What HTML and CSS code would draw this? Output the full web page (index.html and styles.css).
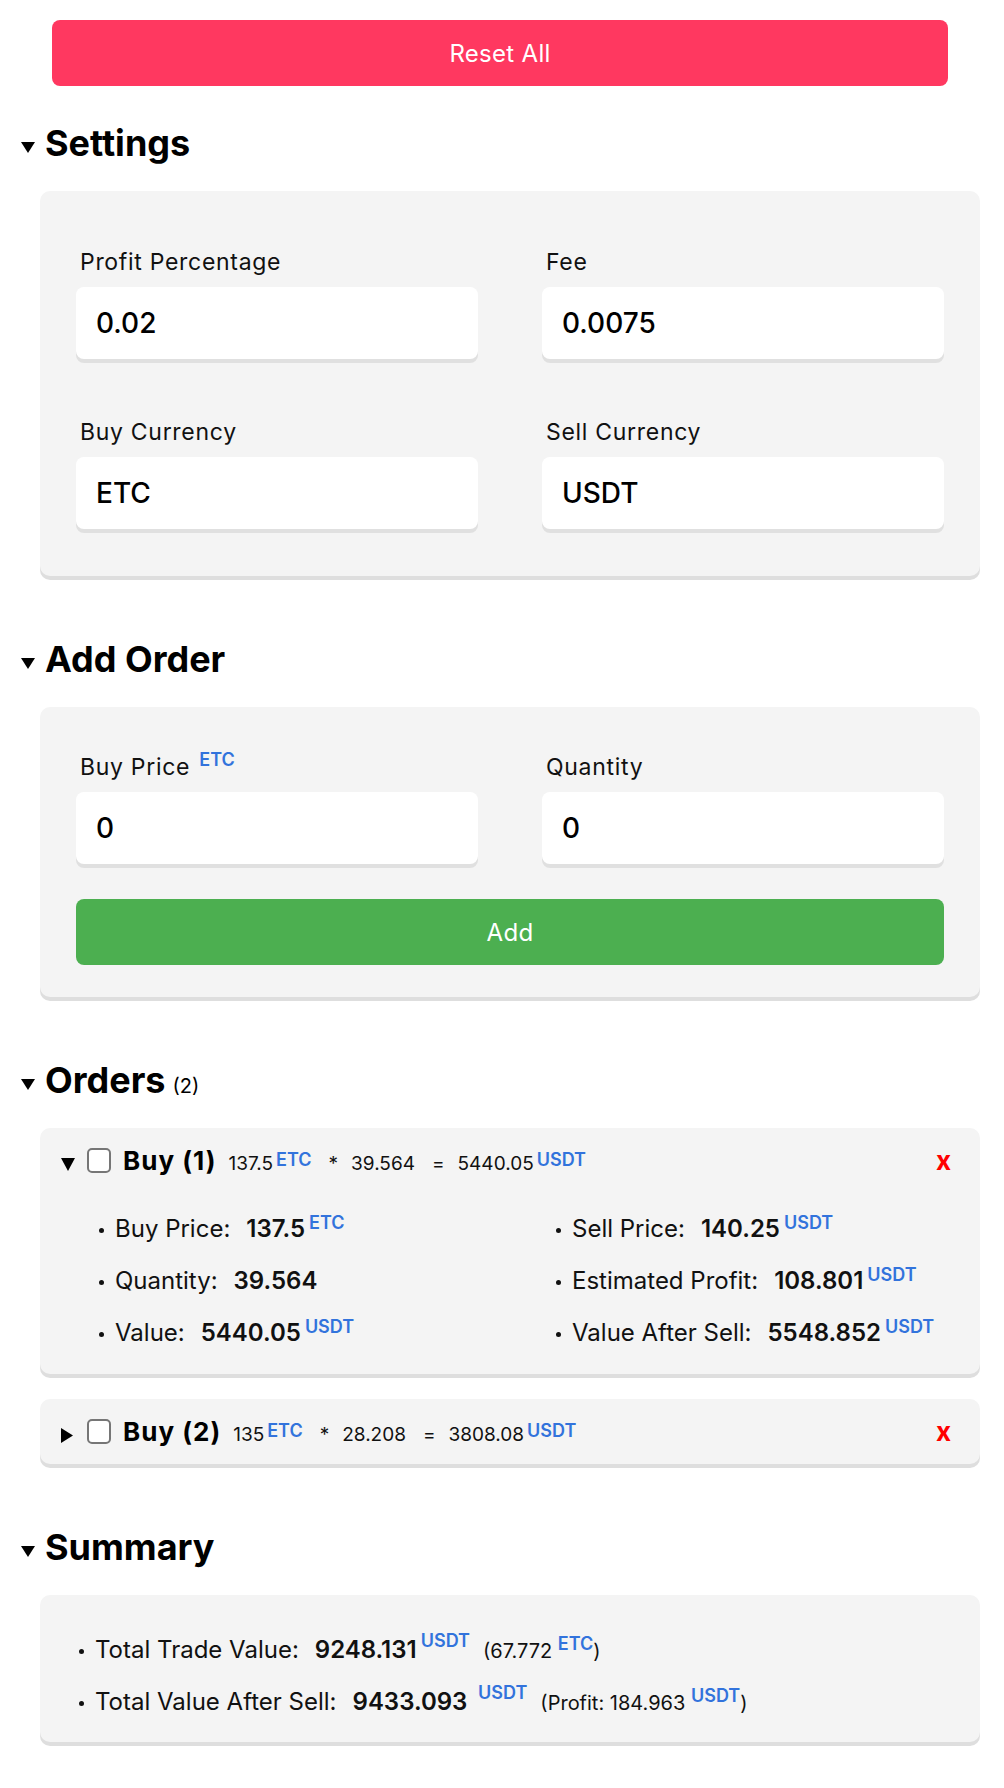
FILE: index.html
```html
<!DOCTYPE html>
<html lang="en">
<head>
<meta charset="utf-8">
<title>Trade Calculator</title>
<link rel="stylesheet" href="styles.css">
</head>
<body>
<div class="page">
  <div class="reset-wrap"><button class="btn btn-reset" type="button">Reset All</button></div>

  <section class="section">
    <h2 class="section-title"><svg class="caret" width="14" height="11" viewBox="0 0 14 11"><polygon points="0,0 14,0 7,11"/></svg>Settings</h2>
    <div class="panel panel-settings">
      <div class="fields">
        <div class="field"><label class="field-label">Profit Percentage</label><input class="field-input" type="text" value="0.02"></div>
        <div class="field"><label class="field-label">Fee</label><input class="field-input" type="text" value="0.0075"></div>
        <div class="field"><label class="field-label">Buy Currency</label><input class="field-input" type="text" value="ETC"></div>
        <div class="field"><label class="field-label">Sell Currency</label><input class="field-input" type="text" value="USDT"></div>
      </div>
    </div>
  </section>

  <section class="section">
    <h2 class="section-title"><svg class="caret" width="14" height="11" viewBox="0 0 14 11"><polygon points="0,0 14,0 7,11"/></svg>Add Order</h2>
    <div class="panel panel-add">
      <div class="fields">
        <div class="field"><label class="field-label">Buy Price <sup class="cur cur-label">ETC</sup></label><input class="field-input" type="text" value="0"></div>
        <div class="field"><label class="field-label">Quantity</label><input class="field-input" type="text" value="0"></div>
      </div>
      <button class="btn btn-add" type="button">Add</button>
    </div>
  </section>

  <section class="section">
    <h2 class="section-title"><svg class="caret" width="14" height="11" viewBox="0 0 14 11"><polygon points="0,0 14,0 7,11"/></svg>Orders<span class="count">(2)</span></h2>
    <div class="orders">
      <div class="order">
        <div class="order-head">
          <svg class="order-caret" width="14" height="13" viewBox="0 0 14 13"><polygon points="0,0 14,0 7,13"/></svg>
          <input class="check" type="checkbox">
          <div class="order-title"><b class="order-name">Buy (1)</b><span class="order-calc">137.5<sup class="cur cur-small">ETC</sup><span class="op">*</span>39.564<span class="op">=</span>5440.05<sup class="cur cur-small">USDT</sup></span></div>
          <span class="remove">x</span>
        </div>
        <ul class="order-details">
          <li class="row"><span class="k">Buy Price:</span><b class="v">137.5</b><sup class="cur">ETC</sup></li>
          <li class="row"><span class="k">Sell Price:</span><b class="v">140.25</b><sup class="cur">USDT</sup></li>
          <li class="row"><span class="k">Quantity:</span><b class="v">39.564</b></li>
          <li class="row"><span class="k">Estimated Profit:</span><b class="v">108.801</b><sup class="cur">USDT</sup></li>
          <li class="row"><span class="k">Value:</span><b class="v">5440.05</b><sup class="cur">USDT</sup></li>
          <li class="row"><span class="k">Value After Sell:</span><b class="v">5548.852</b><sup class="cur">USDT</sup></li>
        </ul>
      </div>
      <div class="order">
        <div class="order-head">
          <svg class="order-caret order-caret-closed" width="12" height="15" viewBox="0 0 12 15"><polygon points="0,0 12,7.5 0,15"/></svg>
          <input class="check" type="checkbox">
          <div class="order-title"><b class="order-name">Buy (2)</b><span class="order-calc">135<sup class="cur cur-small">ETC</sup><span class="op">*</span>28.208<span class="op">=</span>3808.08<sup class="cur cur-small">USDT</sup></span></div>
          <span class="remove">x</span>
        </div>
      </div>
    </div>
  </section>

  <section class="section">
    <h2 class="section-title"><svg class="caret" width="14" height="11" viewBox="0 0 14 11"><polygon points="0,0 14,0 7,11"/></svg>Summary</h2>
    <div class="panel panel-summary">
      <ul class="summary-list">
        <li class="row"><span class="k">Total Trade Value:</span><b class="v">9248.131</b><sup class="cur cur-high">USDT</sup><span class="paren">(67.772 <sup class="cur cur-paren">ETC</sup>)</span></li>
        <li class="row"><span class="k">Total Value After Sell:</span><b class="v">9433.093</b> <sup class="cur cur-high cur-gap">USDT</sup><span class="paren">(Profit: 184.963 <sup class="cur cur-paren">USDT</sup>)</span></li>
      </ul>
    </div>
  </section>
</div>
</body>
</html>
```

FILE: styles.css
```css
* {
  box-sizing: border-box;
}

html,
body {
  margin: 0;
  background: #ffffff;
}

body {
  font-family: Inter, "Noto Sans", sans-serif;
  color: #111111;
}

.page {
  padding: 20px 24px 40px 20px;
}

/* buttons */
.reset-wrap {
  padding: 0 32px;
}

.btn {
  display: block;
  width: 100%;
  height: 66px;
  border: 0;
  border-radius: 8px;
  color: #ffffff;
  font-family: Inter, "Noto Sans", sans-serif;
  font-size: 24px;
  letter-spacing: 0.3px;
  font-weight: 400;
  cursor: pointer;
}

.btn-reset {
  background: #ff3860;
}

.btn-add {
  background: #4caf50;
  margin-top: 20px;
}

/* sections */
.section {
  margin-top: 35px;
}

.section + .section {
  margin-top: 61px;
}

.section-title {
  display: flex;
  align-items: center;
  margin: 0 0 26px;
  font-size: 36px;
  line-height: 44px;
  font-weight: 700;
  color: #000000;
}

.caret {
  flex: none;
  margin: 9px 10px 0 1px;
  fill: #000000;
}

.count {
  font-size: 20px;
  font-weight: 400;
  line-height: 1;
  margin-left: 7px;
  align-self: flex-end;
  margin-bottom: 6px;
}

/* panels */
.panel {
  margin-left: 20px;
  background: #f4f4f4;
  border-radius: 10px;
  box-shadow: 0 4px 0 #dedede;
}

.panel-settings {
  padding: 59px 36px 32px;
}

.panel-add {
  padding: 48px 36px 32px;
}

.panel-summary {
  padding: 33px 39px 18px;
}

.fields {
  display: grid;
  grid-template-columns: 1fr 1fr;
  column-gap: 64px;
  row-gap: 46px;
}

.field {
  padding-bottom: 15px;
}

.field-label {
  display: block;
  margin-bottom: 13px;
  padding-left: 4px;
  font-size: 23px;
  letter-spacing: 0.7px;
  line-height: 24px;
  color: #111111;
}

.field-input {
  display: block;
  width: 100%;
  height: 72px;
  padding: 0 20px;
  border: 0;
  border-radius: 8px;
  background: #ffffff;
  box-shadow: 0 4px 0 #e0e0e0;
  font-family: Inter, "Noto Sans", sans-serif;
  font-size: 28px;
  font-weight: 500;
  color: #000000;
  outline: none;
}

/* currency superscripts */
.cur {
  font-size: 18px;
  font-weight: 600;
  letter-spacing: 0;
  line-height: 0;
  color: #3273dc;
  vertical-align: 8px;
  margin-left: 4px;
}

.cur-label {
  margin-left: 2px;
  vertical-align: 9px;
}

.cur-small {
  margin-left: 3px;
  vertical-align: 4px;
}

.cur-high {
  vertical-align: 11px;
}

.cur-gap {
  margin-left: 4px;
}

.cur-paren {
  margin-left: 0;
}

/* orders */
.orders {
  margin-left: 20px;
}

.order {
  background: #f4f4f4;
  border-radius: 10px;
  box-shadow: 0 4px 0 #dedede;
  padding: 20px 29px 19px 21px;
}

.order + .order {
  margin-top: 25px;
}

.order-head {
  display: flex;
  align-items: flex-start;
}

.order-caret {
  flex: none;
  margin-top: 10px;
  fill: #000000;
}

.order-caret-closed {
  margin-top: 9px;
  margin-right: 2px;
}

.check {
  -webkit-appearance: none;
  appearance: none;
  flex: none;
  width: 24px;
  height: 25px;
  margin: 0 0 0 12px;
  border: 2px solid #767676;
  border-radius: 5px;
  background: #ffffff;
}

.order-title {
  margin-left: 12px;
  font-size: 26px;
  line-height: 26px;
  white-space: nowrap;
}

.order-name {
  letter-spacing: 1px;
  font-weight: 700;
  color: #000000;
}

.order-calc {
  margin-left: 12px;
  font-size: 19px;
  line-height: 1;
  color: #111111;
}

.op {
  margin: 0 13px 0 17px;
}

.remove {
  margin-left: auto;
  font-size: 26px;
  line-height: 26px;
  font-weight: 700;
  color: #ff0000;
}

.order-details {
  list-style: none;
  margin: 33px 0 0 38px;
  padding: 0;
  display: grid;
  grid-template-columns: 457px 1fr;
  row-gap: 8px;
}

/* rows */
.row {
  font-size: 24px;
  line-height: 44px;
  white-space: nowrap;
}

.row::before {
  content: "";
  display: inline-block;
  width: 5px;
  height: 5px;
  margin-right: 11px;
  border-radius: 50%;
  background: #111111;
  vertical-align: middle;
}

.v {
  margin-left: 16px;
  font-weight: 600;
  color: #111111;
}

.summary-list {
  list-style: none;
  margin: 0;
  padding: 0;
  display: grid;
  row-gap: 8px;
}

.paren {
  margin-left: 13px;
  font-size: 20px;
  line-height: 1;
}
```
